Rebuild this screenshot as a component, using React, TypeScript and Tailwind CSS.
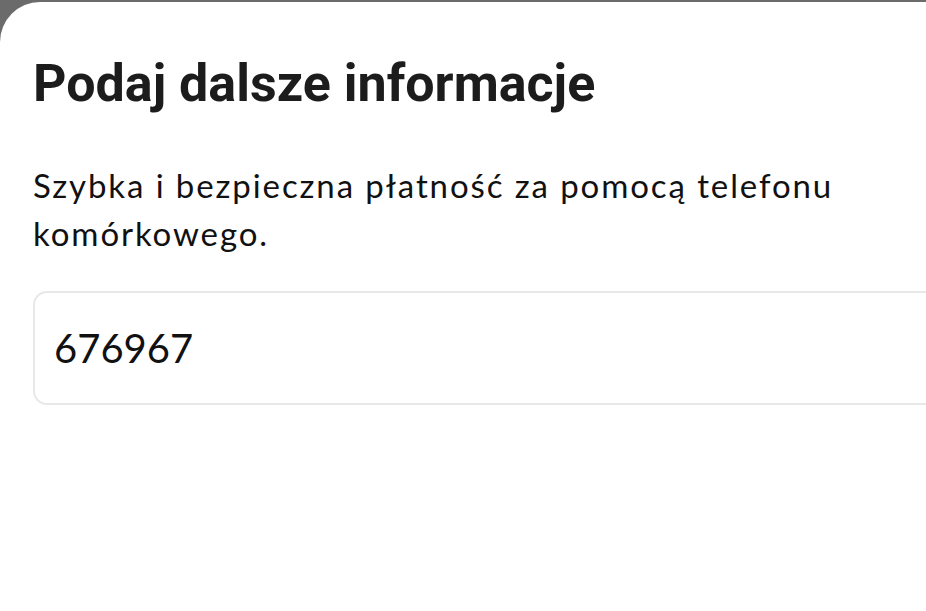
import React from 'react';

const App: React.FC = () => {
  return (
    <div className="h-[611px] w-[926px] overflow-hidden bg-[#6b6b6b] pt-[2px]">
      <div className="h-full rounded-tl-[40px] bg-white pl-[33px] pt-[51px]">
        {/* Header */}
        <h1 className="font-['Roboto',sans-serif] text-[52px] font-bold leading-[61px] text-[#1c1c1c]">
          Podaj dalsze informacje
        </h1>

        <p className="mt-[47px] font-['Lato',sans-serif] text-[33px] leading-[48px] tracking-[1.9px] text-[#111]">
          Szybka i bezpieczna płatność za pomocą telefonu
          <br />
          komórkowego.
        </p>

        {/* Phone number field */}
        <div className="mt-[34px] flex h-[114px] w-[calc(100%+24px)] items-center rounded-[14px] border-2 border-[#e8e8e8] px-[19px]">
          <span className="font-['Lato',sans-serif] text-[40px] text-[#111]">676967</span>
        </div>
      </div>
    </div>
  );
};

export default App;
